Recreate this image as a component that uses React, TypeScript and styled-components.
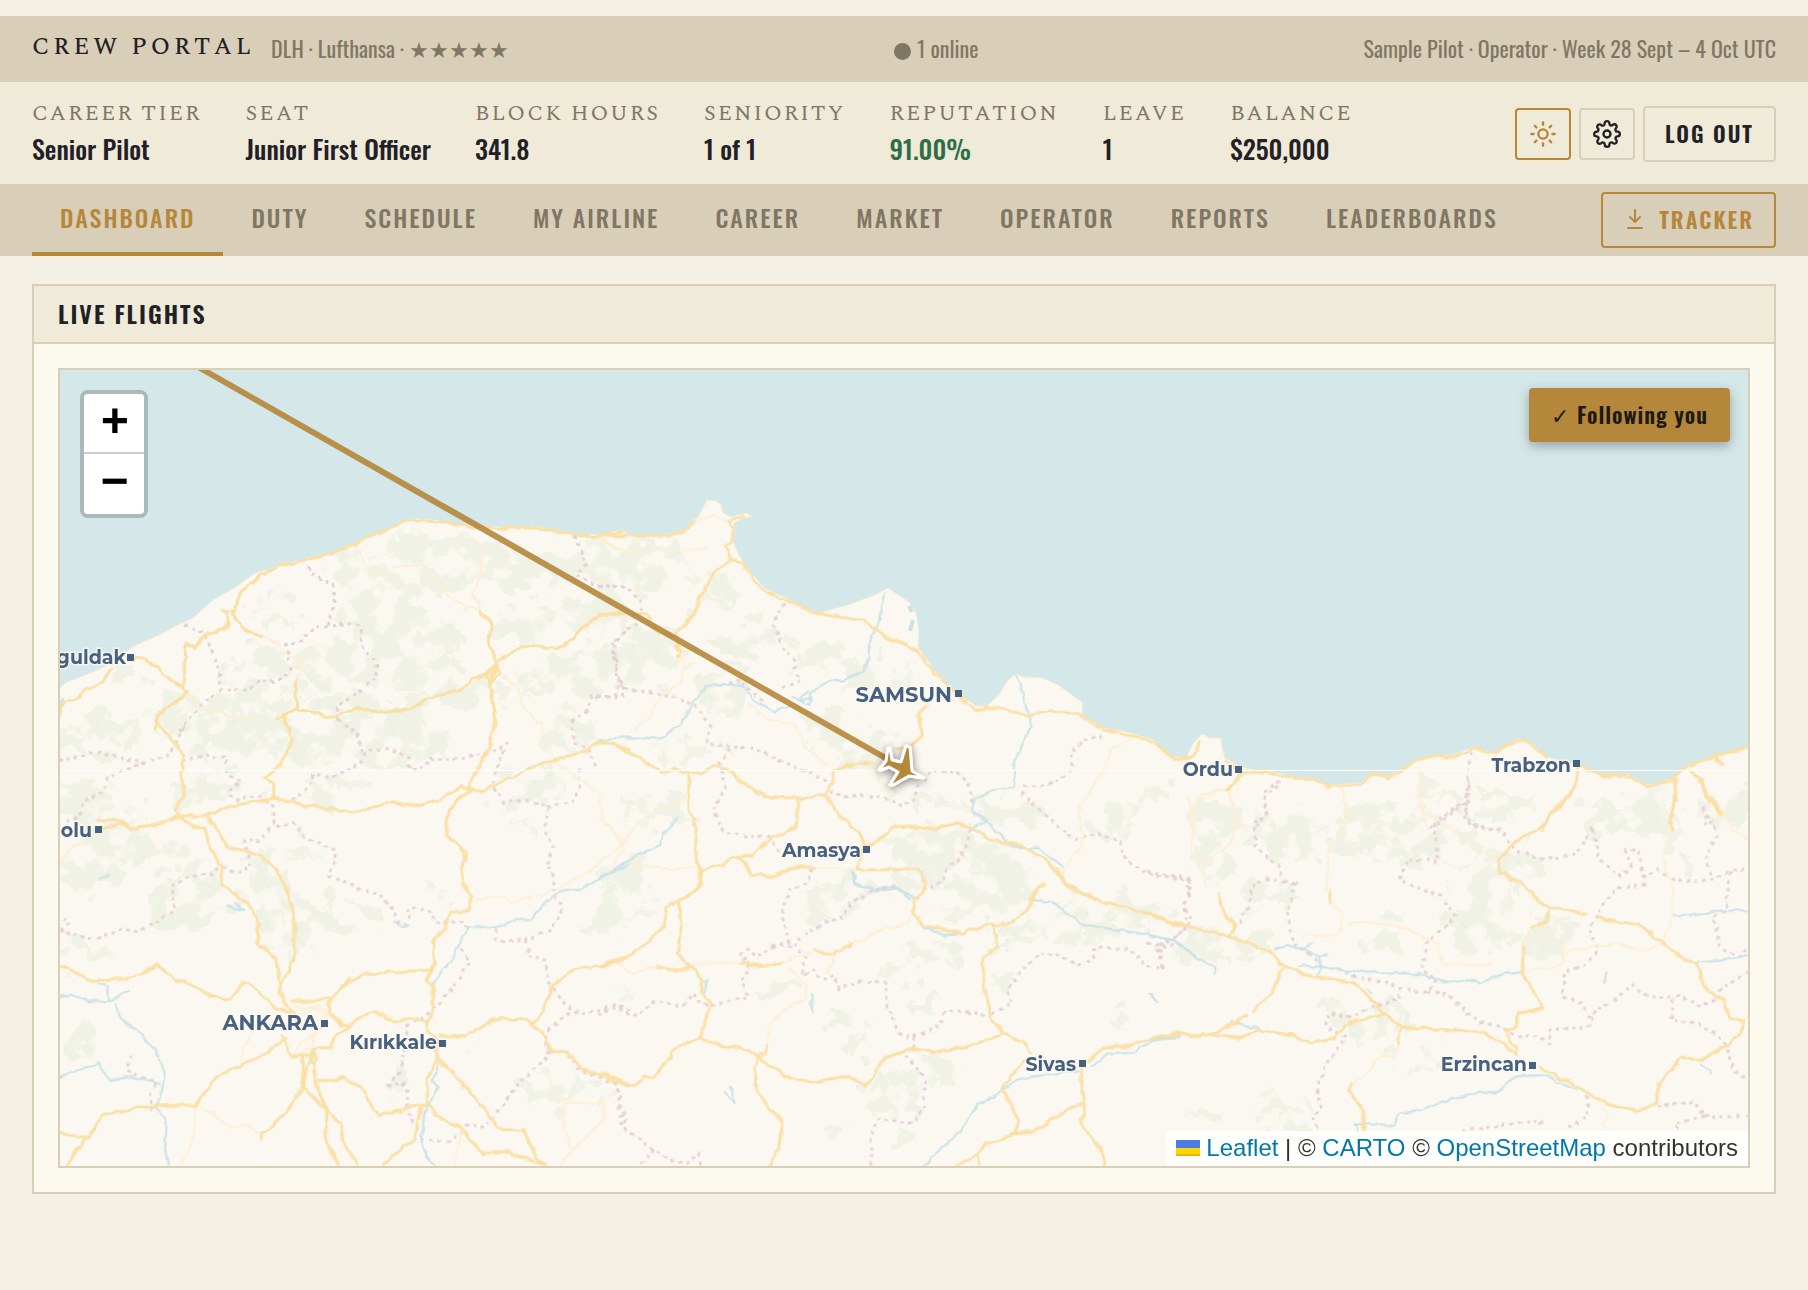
import React from "react";
import styled, { createGlobalStyle } from "styled-components";
import { Sun } from "lucide-react";
import { FiSettings } from "react-icons/fi";

const c = {
  page: "#f5f0e4",
  band: "#d9cfb8",
  soft: "#f0ead9",
  card: "#fcf9ee",
  ink: "#1f2126",
  muted: "#7f7764",
  gold: "#b5873a",
  green: "#2d6e47",
  sea: "#d5e8e9",
  land: "#fbf8f1",
  wood: "#eff2e4",
  road: "#fbe0a6",
  minor: "#fdefd6",
  border: "#e4d0d6",
  river: "#c8e2e8",
  label: "#46607f",
};

const condensed = `Oswald, "Liberation Sans Narrow", "Roboto Condensed", "Open Sans Condensed", "Liberation Sans", sans-serif`;
const serif = `Spectral, "Liberation Serif", serif`;

const Global = createGlobalStyle`
  * { box-sizing: border-box; }
  body { margin: 0; background: ${c.page}; color: ${c.ink}; font-family: ${condensed}; }
`;

const Page = styled.div`
  padding: 16px 0 96px;
`;

const TopBar = styled.header`
  display: flex;
  align-items: center;
  justify-content: space-between;
  height: 66px;
  padding: 0 32px 2px;
  background: ${c.band};
  color: ${c.muted};
  font-size: 22px;
  line-height: 32px;
`;

const Brand = styled.div`
  display: flex;
  align-items: center;
  gap: 16px;
`;

const Title = styled.h1`
  margin: 0;
  padding-bottom: 2px;
  color: ${c.ink};
  font-family: ${serif};
  font-size: 24px;
  font-weight: 500;
  letter-spacing: 4px;
`;

const Online = styled.span`
  display: flex;
  align-items: center;
  gap: 6px;
`;

const Dot = styled.span`
  width: 17px;
  height: 17px;
  margin-top: 6px;
  border-radius: 50%;
  background: currentColor;
`;

const StatsBar = styled.section`
  display: flex;
  align-items: center;
  justify-content: space-between;
  height: 102px;
  padding: 2px 32px 0;
  background: ${c.soft};
`;

const Stats = styled.dl`
  display: flex;
  gap: 44px;
  margin: 0;
`;

const StatLabel = styled.dt`
  color: ${c.muted};
  font-family: ${serif};
  font-size: 22px;
  line-height: 30px;
  letter-spacing: 2px;
`;

const StatValue = styled.dd<{ $good?: boolean }>`
  margin: 0;
  color: ${(p) => (p.$good ? c.green : c.ink)};
  font-size: 26px;
  font-weight: 500;
  line-height: 40px;
`;

const Actions = styled.div`
  display: flex;
  align-items: center;
  gap: 8px;
`;

const Button = styled.button<{ $gold?: boolean }>`
  display: flex;
  align-items: center;
  justify-content: center;
  gap: 12px;
  height: 56px;
  padding: 0 20px 2px;
  border: 2px solid ${(p) => (p.$gold ? c.gold : c.band)};
  border-radius: 4px;
  background: transparent;
  color: ${(p) => (p.$gold ? c.gold : c.ink)};
  font-family: ${condensed};
  font-size: 22px;
  font-weight: 600;
  letter-spacing: 2px;
  cursor: pointer;
`;

const IconButton = styled(Button)`
  width: 56px;
  height: 52px;
  padding: 0;
`;

const Nav = styled.nav`
  display: flex;
  align-items: center;
  justify-content: space-between;
  height: 72px;
  padding: 0 32px;
  background: ${c.band};
`;

const Tabs = styled.div`
  display: flex;
  align-self: stretch;
`;

const Tab = styled.a<{ $active?: boolean }>`
  padding: 2px 28px 0;
  border-bottom: 4px solid ${(p) => (p.$active ? c.gold : "transparent")};
  color: ${(p) => (p.$active ? c.gold : c.muted)};
  font-size: 24px;
  font-weight: 500;
  line-height: 62px;
  letter-spacing: 2px;
  text-decoration: none;
  white-space: nowrap;
`;

const Panel = styled.main`
  margin: 28px 32px 0;
  border: 2px solid ${c.band};
  background: ${c.card};
`;

const PanelTitle = styled.h2`
  margin: 0;
  padding: 0 24px 2px;
  border-bottom: 2px solid ${c.band};
  background: ${c.soft};
  font-size: 24px;
  font-weight: 600;
  line-height: 54px;
  letter-spacing: 2px;
`;

const PanelBody = styled.div`
  padding: 24px;
`;

const MapFrame = styled.div`
  position: relative;
  height: 800px;
  overflow: hidden;
  border: 2px solid ${c.band};
  background: ${c.sea};
`;

const MapSvg = styled.svg`
  display: block;
  width: 100%;
  height: 100%;
`;

const ZoomControl = styled.div`
  position: absolute;
  top: 20px;
  left: 20px;
  border: 4px solid rgba(0, 0, 0, 0.2);
  border-radius: 8px;
  background-clip: padding-box;
`;

const ZoomButton = styled.button`
  display: block;
  width: 60px;
  height: 60px;
  padding: 0;
  border: 0;
  background: #fff;
  color: #000;
  font: bold 48px/60px "Liberation Mono", monospace;
  text-indent: 2px;
  cursor: pointer;

  &:first-child {
    border-bottom: 2px solid #ccc;
    border-radius: 4px 4px 0 0;
  }
  &:last-child {
    border-radius: 0 0 4px 4px;
  }
`;

const FollowButton = styled.button`
  position: absolute;
  top: 18px;
  right: 18px;
  height: 54px;
  padding: 0 22px 2px;
  border: 0;
  border-radius: 4px;
  background: ${c.gold};
  box-shadow: 0 4px 12px rgba(0, 0, 0, 0.3);
  color: #1d1a12;
  font-family: ${condensed};
  font-size: 22px;
  font-weight: 600;
  letter-spacing: 1px;
  cursor: pointer;
`;

const Check = styled.span`
  font-weight: 400;
`;

const Attribution = styled.div`
  position: absolute;
  right: 0;
  bottom: 0;
  display: flex;
  align-items: center;
  gap: 6px;
  padding: 0 10px 2px;
  background: rgba(255, 255, 255, 0.8);
  color: #333;
  font: 24px/33px "Liberation Sans", sans-serif;

  a {
    color: #0078a8;
    text-decoration: none;
  }
`;

const Flag = styled.svg`
  width: 24px;
  height: 16px;
`;

type Tile = {
  x: number;
  y: number;
  kx: number;
  roads: string[];
  minor: string[];
  borders: string[];
  rivers: string[];
  woods: [number, number, number, number][];
};

/* Each tile keeps its own coordinates; x, y and kx place it on the map. */
const tiles: Tile[] = [
  {
    x: 30, y: 270, kx: 2.6133,
    roads: [
      "270,1165 310,1168 350,1210 400,1250 412,1265 380,1300 340,1330 330,1380",
      "405,1250 410,1120 430,1135 465,1092 520,1075 522,1030 505,1020 535,1025 545,980 575,940 650,890 730,868 790,852 840,828 890,800 995,748 1060,755 1120,765 1200,775 1330,773 1440,797 1500,795 1550,785",
      "535,1030 560,1080 605,1100",
      "78,1300 130,1285 140,1262 190,1240 215,1195",
      "78,1340 90,1300",
      "650,1345 700,1320 740,1325 770,1338 810,1338 850,1315 930,1328 1000,1315 1040,1285 1125,1262 1160,1225 1215,1210 1225,1175 1290,1128 1380,1135 1425,1105 1440,1075 1500,1035 1568,1025",
      "700,1320 696,1240 700,1235",
      "1180,1025 1210,1060 1200,1115 1222,1180 1205,1235 1218,1330 1215,1380",
      "1225,1180 1195,1215 1205,1240 1228,1210 1222,1180",
      "665,1345 680,1380",
    ],
    minor: [
      "840,828 865,840 870,875 905,910 945,915 950,890 1040,885 1050,920 1110,990 1180,1022",
      "605,1100 650,1120 680,1160 715,1180 700,1235",
      "1180,825 1185,900 1160,970 1180,1020",
      "412,1268 450,1310 520,1335 600,1350",
      "1230,1210 1280,1260 1290,1310 1330,1360",
      "1480,800 1530,835 1568,845",
    ],
    borders: [
      "725,870 735,910 800,950 795,1010 780,1065",
      "410,1062 460,1095 480,1150 500,1220 500,1260 450,1305 410,1355 395,1380",
      "500,1260 570,1260 600,1232 650,1235 685,1200 672,1120 715,1115 740,1075 780,1070 830,1060 865,1070 870,1130 910,1180 905,1230 840,1280 805,1310 810,1360",
      "1425,800 1440,840 1460,880 1430,915 1475,945 1568,952",
      "1560,1090 1525,1120 1535,1215 1560,1265 1540,1285 1475,1275 1455,1330 1420,1350",
    ],
    rivers: [],
    woods: [
      [1080, 850, 110, 70], [950, 920, 140, 60], [1250, 880, 110, 60], [1420, 860, 120, 70],
      [660, 1020, 60, 30], [920, 1050, 90, 70], [1010, 1110, 100, 60], [820, 1180, 130, 60],
      [600, 1200, 90, 50], [1080, 1230, 120, 60], [420, 1330, 100, 50], [1380, 1240, 120, 60],
      [1480, 1020, 110, 50], [250, 1210, 50, 20], [620, 1300, 90, 50], [1500, 1180, 70, 60],
      [880, 1330, 120, 40], [1300, 1050, 80, 40],
    ],
  },
  {
    x: 600, y: 450, kx: 2.6133,
    roads: [
      "0,255 80,258 150,260 215,248 250,218",
      "375,195 340,212 350,240 347,275 330,290 340,320 375,340 400,385 435,428 500,455 560,488 690,508 750,560 830,600 880,670 905,700 950,745 985,782 1040,772 1120,797 1180,785 1250,790 1320,840 1400,860 1450,875 1500,928 1545,925 1568,880",
      "345,325 300,375 262,440 250,495 200,550 205,600",
      "0,495 60,488 120,492 150,545 200,560 215,600 205,620",
      "0,875 40,880 70,905 110,925 160,965 200,958 250,972 300,950 335,955 370,990 430,1040 520,1045 595,1035 618,965 650,945 715,940",
      "595,1035 625,1095 680,1145 695,1190 740,1165 775,1130 830,1128 880,1138 930,1120 980,1138 1030,1172 1100,1185 1170,1230 1225,1305 1310,1350",
      "520,1048 515,1130 450,1165 400,1215 350,1222 320,1245 270,1260 255,1240 250,1110 235,1080 235,975",
      "370,1225 400,1275 460,1280 510,1250 560,1252",
      "270,1262 262,1310 215,1350",
      "690,1200 675,1260 835,1258 850,1285 852,1320 830,1348",
      "855,770 835,790 845,855 820,885 780,900",
      "1160,1300 1125,1350",
    ],
    minor: [
      "250,215 300,195 340,210", "205,303 250,300 285,290", "0,260 60,305 100,300 105,262",
      "205,600 220,640 215,695 165,735 130,800 95,838",
      "390,760 440,805 510,825 545,900 600,945", "720,945 735,1000 770,1015",
      "0,1100 55,1160 60,1200 25,1270", "60,1180 120,1100 220,1050 235,1000",
      "90,1240 160,1255 260,1255", "560,1252 670,1262",
      "1390,865 1340,900 1305,985 1255,1070 1265,1180 1215,1255 1210,1290",
      "1540,1040 1555,1110 1550,1160",
    ],
    borders: [
      "0,408 75,412 115,465 100,515 40,575 45,660 60,715 130,725 200,740 255,770 290,830 280,880 340,890 410,895 470,930 530,960 605,995 610,1030 660,1040 740,1040 790,1070 825,1050 830,1010 870,960 940,965 970,1010 975,1060",
      "485,465 455,515 480,590 510,630 525,695 470,715",
      "300,705 370,690 400,730 440,760",
      "340,900 315,940 330,1010 300,1080 325,1150 440,1160 470,1200",
      "1115,1010 1190,1000 1235,960 1235,900 1280,860 1330,860",
      "1105,1030 1170,1100 1215,1140 1240,1170 1310,1150 1360,1170 1375,1230 1430,1270 1545,1290 1540,1350",
      "968,1140 960,1200 915,1250 900,1290 855,1320",
      "555,1260 545,1300 495,1320", "0,740 40,740 50,690",
    ],
    rivers: [
      "745,430 735,510 705,580 705,620 690,665 640,690 590,695 555,730 550,765 505,740",
      "0,868 80,862 165,865 215,820 245,760 275,710 340,700 375,705 400,750 460,785 500,765",
      "1090,680 1105,720 1130,830 1085,930 1085,1010 1035,1020 980,1045 975,1080 1015,1115 970,1135",
      "205,1105 170,1150 160,1185 75,1230 0,1290", "1015,1115 1080,1190 1150,1195 1215,1255",
      "665,1270 670,1295 720,1320 770,1310 830,1348", "550,725 520,750 555,745",
    ],
    woods: [
      [110, 340, 110, 50], [90, 390, 90, 40], [300, 410, 60, 40], [400, 580, 90, 40],
      [120, 620, 90, 70], [330, 720, 70, 60], [590, 620, 70, 40], [720, 680, 80, 40],
      [240, 900, 90, 30], [700, 900, 80, 40], [600, 830, 60, 50], [900, 1060, 120, 25],
      [1060, 1100, 80, 30], [900, 1190, 120, 40], [960, 1270, 140, 50], [150, 1080, 80, 40],
      [1340, 1110, 60, 40], [70, 1280, 60, 40], [1440, 1060, 40, 30],
    ],
  },
  {
    x: 1180, y: 370, kx: 2.6133,
    roads: [
      "0,1168 22,1160",
      "125,1175 165,1208 230,1205 310,1227 350,1228 390,1248 475,1242 510,1210 545,1225 590,1192 650,1160 725,1158 775,1133 825,1150 885,1108 925,1125 960,1160",
      "165,1210 145,1240 120,1258",
      "1045,1185 1090,1210 1120,1220 1170,1216 1225,1248 1290,1228 1325,1190 1400,1158 1485,1132",
      "1045,1190 1035,1250 985,1310 950,1380", "1290,1228 1300,1290 1283,1330 1288,1380",
      "1335,1200 1365,1230 1375,1275 1400,1315 1420,1330", "1400,1158 1420,1185",
    ],
    minor: [
      "140,1240 90,1275 60,1270 25,1330 35,1380", "125,1258 140,1310 155,1380",
      "420,1250 440,1310 425,1380", "630,1200 625,1290 650,1370",
    ],
    borders: [
      "765,1150 755,1220 755,1290 745,1340 780,1375 850,1378",
      "262,1235 220,1270 230,1330 195,1380", "745,1300 690,1350 655,1370", "1370,1310 1380,1380",
    ],
    rivers: [],
    woods: [[90, 1310, 50, 30], [320, 1360, 70, 25], [560, 1350, 90, 30], [690, 1260, 50, 30], [840, 1300, 70, 35], [1150, 1330, 100, 30], [1440, 1290, 50, 50]],
  },
  {
    x: 30, y: 720, kx: 2.6133,
    roads: [
      "330,0 350,30 385,70 405,110 398,160 405,220 380,270 395,292 330,312 265,325 240,310 185,328",
      "180,300 235,298 265,325", "395,292 465,285 520,260 640,235 700,250 850,278 900,262 950,245 1000,258 1070,240 1130,202 1180,215 1250,178 1320,140 1400,110 1450,95 1500,62 1568,90",
      "665,0 688,60 655,135 615,175 640,195 640,230",
      "1220,0 1200,90 1175,140 1150,200", "1160,205 1110,250 1090,300 1090,340 1125,375 1135,400 1130,490 1158,530 1150,572 1100,578 1085,630 1058,660 1058,740 1040,780 1055,800 1055,880 1042,905 1045,940 1070,965",
      "1130,390 1145,400 1135,425", "395,292 430,318 460,322 470,380 505,440 500,490 575,555 600,610 595,670 645,715 655,800",
      "465,290 520,380 610,410 650,455 675,510 697,625 692,720 655,800 665,850 690,875",
      "78,740 105,742 150,780 215,780 270,770 335,735 380,780 410,785 480,830 525,838 560,785 600,810 640,865 690,880",
      "690,840 740,845 790,830 820,800 840,775", "820,800 880,760 1050,750 1055,735",
      "790,830 785,880 830,920 870,890 905,875 955,910 990,892 1045,905",
      "790,880 810,910 835,918 800,950 785,985 745,988",
      "670,955 600,1015 500,1060 435,1155 300,1158 190,1188 155,1255 78,1240", "145,1255 100,1335",
      "660,950 685,1005 745,1005", "718,1010 715,1100 670,1180 610,1240 610,1258",
      "740,1000 720,1060 718,1105 770,1165 815,1215 820,1260 860,1335",
      "748,990 750,1090 775,1170 778,1270 808,1335", "752,1082 800,1080 820,1070 870,1105 910,1185 990,1165 1040,1155",
      "1075,945 1140,948 1210,900 1300,895 1315,912 1345,870 1370,795 1420,750 1500,735 1568,708",
      "1310,912 1345,940 1365,995 1405,995 1445,1045 1568,1098",
      "1070,970 1065,1020 1110,1060 1200,1180 1230,1225 1290,1228 1325,1310 1350,1335",
      "1065,1020 1040,1075 1038,1150 1080,1195 1130,1225 1185,1300 1255,1298 1350,1335",
      "1025,1160 1005,1260 960,1300 925,1335",
    ],
    minor: [
      "78,430 115,380 150,360", "435,1160 430,1240 400,1335", "435,1155 480,1180 530,1225 570,1215 610,1245",
      "1158,542 1220,525 1260,545 1370,515 1470,450 1550,370 1500,290 1490,220 1380,130 1340,60 1340,0",
      "550,1035 560,985 585,945", "1355,1045 1365,1120 1400,1145 1500,1150 1540,1090", "1400,1150 1400,1230 1420,1290 1500,1200 1505,1150",
      "690,855 780,870 770,920 720,960 690,1000", "700,870 760,855 800,900", "1130,1230 1115,1335", "1420,1290 1385,1335",
      "700,890 745,870 775,885", "745,930 745,985 710,1000",
    ],
    borders: [
      "78,120 180,97 300,130 360,110 385,60 410,10", "405,125 460,105 515,115 520,165 555,185 520,215 540,240 600,225 640,260 640,310",
      "300,130 205,170 190,220 140,245 130,290 90,305", "690,240 740,190 745,160 790,175 865,130 880,95 935,85 990,110 995,150 1040,140 1045,115 1120,115 1200,100 1250,70 1220,150 1210,200 1240,245 1300,240 1355,265 1420,245 1440,200 1440,140",
      "810,0 860,45 870,95", "640,310 600,365 560,360 580,440 540,460 500,440 480,460 420,470 370,495 380,570 330,610 280,635 240,625 175,660 85,635 105,610 85,590",
      "650,320 690,310 720,350 800,390 800,430 780,465 870,510 910,515 945,560 970,615 995,600 990,565 1045,570 1060,610 1130,605 1150,625",
      "1355,265 1350,330 1370,380 1350,430 1375,480 1370,525 1395,560 1365,630 1295,660 1220,662 1218,625",
      "1300,665 1305,710 1350,720 1355,780 1400,850 1440,885 1500,870 1530,855 1568,868", "1410,880 1360,925 1350,970 1360,1005 1290,1080 1230,1165 1190,1225 1140,1215",
      "1130,690 1150,720 1125,780 1080,840 1040,885 990,915 975,1020 965,1060 930,1100 985,1090 995,1190 1015,1230",
      "1410,1005 1440,1050 1535,1090 1550,1170 1560,1240", "265,1010 255,1050 330,1090 315,1130 320,1180", "1050,1260 1100,1262 1130,1240",
      "1420,0 1425,70 1465,90 1480,140",
    ],
    rivers: [
      "78,835 110,825 150,840 210,845 205,800 180,790", "210,845 260,812", "225,850 235,890 300,950 340,1010 355,1060 345,1130 330,1160 360,1210 355,1290 365,1335",
      "78,1072 130,1050 180,1030 210,1080 270,1070 340,1095", "185,475 210,467", "520,560 560,570 540,550", "955,605 975,620 990,612",
      "1055,790 1110,710 1145,630 1150,618 1215,625 1270,600 1310,600 1350,545 1400,510 1440,510 1500,470 1568,430",
      "1070,1035 1055,1080 1070,1105 1045,1150 1030,1180 1025,1260 1040,1310 1060,1335", "740,985 740,1030",
    ],
    woods: [
      [180, 50, 90, 60], [520, 60, 120, 50], [720, 60, 120, 60], [960, 60, 120, 60], [170, 240, 90, 50],
      [480, 200, 90, 40], [780, 210, 80, 30], [260, 370, 110, 60], [150, 450, 70, 70], [430, 530, 80, 90],
      [640, 500, 50, 110], [740, 600, 60, 60], [720, 390, 60, 30], [1290, 230, 70, 70], [1050, 500, 30, 30],
      [130, 690, 60, 30], [900, 580, 40, 40], [140, 960, 50, 50], [1390, 1100, 90, 50], [960, 1090, 30, 50],
      [1160, 970, 18, 25], [1520, 580, 40, 50], [1390, 50, 60, 50], [650, 640, 30, 50],
    ],
  },
  {
    x: 600, y: 820, kx: 2.6133,
    roads: [
      "265,155 255,210 210,240 175,265 170,315 130,365 60,425 0,440", "210,240 215,320 205,400 240,440 270,480 268,515 292,550 265,652",
      "0,760 45,775 90,797 115,772 145,772 200,685 265,652 310,675 395,688 430,725 500,775 560,790 630,770 670,778 700,800 745,715 820,685 870,697 960,680 1058,645",
      "150,440 205,453 240,438", "372,428 425,440 480,430", "565,392 605,403 660,372",
      "440,675 435,700 415,712 408,740 412,815 480,910 470,980 445,1035",
      "830,232 820,278 850,320 950,340 1010,315 1070,312 1120,270 1140,215 1165,190", "1030,318 1040,375 1005,415 1003,480 1025,590 1055,640 1108,665 1128,700",
      "1110,720 1055,805 1078,860 1095,900 1085,940 1130,938 1240,858 1270,855 1258,910 1320,1000 1322,1035",
      "1085,940 1010,972 990,1000 935,1035", "990,1000 995,1035", "1258,745 1260,810 1270,855",
      "1275,725 1320,682 1390,675 1440,657 1490,652 1515,638 1568,650", "1200,150 1225,200 1300,240 1420,275 1500,310 1568,328",
    ],
    minor: [
      "245,432 370,430", "480,430 540,402 570,395", "660,372 730,335 805,310 820,280", "500,440 545,500 540,540 500,555 445,610 440,675",
      "620,400 600,460", "50,430 85,460 150,440", "0,850 15,880 5,895",
    ],
    borders: [
      "0,585 40,560 100,590 140,545 220,555 245,520 265,555 320,550 390,530 370,485 395,450 370,400 390,385 410,410 470,375 495,370 490,330 475,290 495,220",
      "770,200 720,210 660,245 640,290 590,310 525,350 510,380 540,410 530,465 560,450 580,480 615,465 625,505 690,485 750,490 750,550 770,600 780,640 820,650 890,620 905,575 980,575 1015,595",
      "1030,580 1080,550 1065,510 1100,460 1150,400 1200,405 1245,435 1290,420 1300,380 1390,390 1430,440 1475,445 1465,380 1510,370",
      "825,655 825,685", "800,710 850,770 850,860 820,910 730,895 715,930 710,1035", "45,790 60,920 140,985 180,1020 230,1030 260,1000 265,1035",
      "1545,200 1530,260 1550,300 1510,350", "140,990 105,1035", "500,380 450,375",
    ],
    rivers: [
      "815,240 780,205 720,215 670,190 665,155", "850,325 900,345 945,340", "1130,240 1180,245 1215,275 1270,315 1360,330 1440,345 1500,360 1568,420",
      "555,520 558,580", "275,485 285,480 275,515", "1130,770 1090,780 1050,820 990,855 950,925 850,1035", "1290,735 1330,700 1400,695 1440,665",
      "325,815 355,850 345,800", "1445,525 1455,545", "1130,770 1200,760 1250,755",
    ],
    woods: [
      [950, 140, 130, 50], [960, 210, 150, 60], [870, 390, 60, 30], [640, 200, 50, 30], [600, 260, 60, 30],
      [90, 280, 50, 40], [1180, 330, 130, 40], [1370, 270, 130, 30], [780, 820, 90, 80], [640, 640, 40, 40],
      [900, 750, 35, 30], [850, 570, 35, 30], [780, 940, 20, 50], [640, 930, 30, 30], [1360, 600, 25, 15], [780, 460, 60, 20], [75, 530, 30, 30],
      [1060, 490, 30, 30], [460, 510, 35, 20],
    ],
  },
  {
    x: 1150, y: 780, kx: 2.3833,
    roads: [
      "0,402 80,435 180,465 290,512 310,550 370,585 490,608 555,695 600,740 690,748 790,755 840,785 875,825",
      "165,345 180,400 205,435 195,465", "215,0 185,28", "320,565 290,640 250,695",
      "0,778 70,760 100,770 155,762 235,705", "155,765 210,775 260,750 340,765 385,788 445,772 475,728 555,705",
      "600,740 595,790", "485,912 472,930 510,985 513,1050", "428,330 430,370",
      "1018,0 1005,40 945,130 860,200 835,240 832,275 890,310 940,375 975,385 1040,400", "1070,412 1120,430 1170,432 1225,488 1265,530 1305,548 1320,620 1370,660 1385,712 1420,725 1405,770 1370,800 1320,838 1270,835 1215,910 1210,970 1165,992 1090,970 1000,905 930,862",
      "955,390 945,425 910,445", "895,500 888,580 915,630 938,685 880,700 875,745 850,752 860,785 878,800 875,825",
      "1255,0 1250,80 1240,130", "1312,0 1330,40 1362,97",
    ],
    minor: [
      "185,28 140,40 105,80 100,230 125,250 135,320", "190,30 210,120 195,190 125,250", "460,20 470,130 430,210 420,330",
      "430,370 462,400 455,465 370,465", "470,435 500,425 600,440 690,490 700,550 810,555", "640,20 660,100 760,180 830,240",
      "595,790 590,820 545,835 520,880 485,912", "1240,130 1225,240 1248,330 1240,430 1225,490", "910,445 895,500",
      "890,578 980,560 990,515 960,470 940,440", "990,515 1120,490 1190,510 1225,490", "1080,985 1095,1000 1080,1030 1090,1050", "1370,100 1390,150 1425,170",
    ],
    borders: [
      "305,20 275,50 280,110 250,130 255,200 310,260 320,300 350,310", "320,305 270,295 240,330 240,370 210,440", "350,310 330,400 345,490 400,540",
      "0,275 95,295 85,380 90,435 65,470 20,500 30,560", "760,0 755,100 780,140 845,155 870,210 940,240 1020,220 1060,140 1070,230 1120,290 1150,260 1135,210 1165,210 1180,290",
      "740,75 680,130 690,245 620,235 595,300 700,350 730,410 660,490 650,570 685,600 665,635 600,625 595,660 530,680 480,710 430,700 420,740 470,770 420,860 400,930 410,980 390,1010 405,1050",
      "600,625 540,600 490,590 440,560", "665,635 720,650 770,715 830,740 880,770 930,770 955,790 950,750 1050,740 1055,700 1105,660 1155,615 1190,650 1270,650 1310,680 1350,660",
      "1180,315 1110,325 1080,380 1050,450 1070,510 1045,550 990,580 985,650 1030,670 1050,720", "1180,290 1215,270 1250,300 1340,300 1380,275 1425,265",
      "1250,660 1245,720 1310,730 1370,780 1390,860 1425,900", "1320,85 1355,160 1325,230 1345,300", "1385,280 1375,390 1345,410 1360,500 1410,530 1425,490",
      "1425,575 1360,630 1355,660", "1045,950 1045,1010 990,1050", "1215,980 1300,965 1320,1010 1425,1010", "1320,1010 1255,1030 1260,1050", "750,1052 850,1035 935,1020 940,1048",
      "0,490 30,500",
    ],
    rivers: [
      "0,470 60,480 110,530 155,560 158,585", "300,505 330,495 370,510 405,530 410,560 400,585", "355,560 410,560 450,570 520,575 640,582 720,608 760,600 790,608 850,580 885,575",
      "365,510 385,490", "405,530 425,522", "520,628 535,640", "1245,405 1300,405 1360,392 1425,392", "1305,545 1400,535 1425,525",
      "940,885 870,890 840,930 720,955 650,990 600,1000 580,1035 520,1030 490,1030 500,1050", "945,885 1020,930", "1090,580 1085,610", "1315,850 1340,880",
      "195,725 260,745", "0,645 20,665", "0,785 70,768",
    ],
    woods: [
      [160, 180, 60, 80], [330, 150, 90, 50], [530, 180, 80, 60], [700, 190, 80, 60], [380, 220, 50, 50], [170, 490, 90, 35], [560, 470, 40, 40],
      [800, 430, 80, 80], [290, 350, 60, 50], [1200, 110, 60, 80], [1380, 80, 50, 50], [800, 350, 60, 50], [950, 490, 50, 40], [860, 260, 60, 40],
      [550, 745, 40, 30], [450, 700, 50, 25], [640, 850, 40, 20], [320, 990, 60, 25], [130, 1000, 25, 18], [970, 440, 50, 20], [1270, 240, 15, 25], [590, 700, 40, 20],
      [1090, 130, 50, 40],
    ],
  },
];

const coast =
  "60,688 68,682 84,676 103,668 112,663 133,647 160,635 179,625 194,618 214,600 237,587 256,573 279,567 309,558 336,553 352,545 371,537 394,528 411,519 436,520 459,524 489,527 539,527 566,532 581,536 604,534 623,530 631,535 657,536 682,532 696,522 703,510 708,500 717,501 722,505 724,513 732,517 747,513 753,516 742,519 735,523 733,540 739,553 747,567 765,588 791,600 807,609 820,613 849,605 876,595 889,588 910,602 917,613 920,630 919,647 933,667 944,680 964,697 977,706 988,706 1000,695 1009,680 1017,674 1025,677 1044,678 1059,685 1083,702 1084,717 1105,728 1132,733 1155,740 1170,757 1188,757 1193,745 1203,734 1211,738 1222,738 1223,747 1226,758 1241,767 1260,771 1283,774 1299,778 1314,778 1329,785 1345,784 1362,783 1371,775 1387,777 1406,767 1429,756 1455,755 1475,747 1494,753 1519,739 1534,745 1547,757 1580,765 1597,773 1609,776 1628,774 1647,784 1658,786 1674,778 1689,767 1716,755 1731,753 1750,747";

const cities = [
  { name: "guldak", x: 127, y: 664, dot: [131, 657], size: 19 },
  { name: "olu", x: 93, y: 837, dot: [99, 829], size: 19 },
  { name: "SAMSUN", x: 953, y: 702, dot: [959, 693], size: 21 },
  { name: "Amasya", x: 862, y: 857, dot: [867, 849], size: 19 },
  { name: "Ordu", x: 1234, y: 776, dot: [1239, 769], size: 19 },
  { name: "Trabzon", x: 1572, y: 772, dot: [1577, 763], size: 19 },
  { name: "ANKARA", x: 319, y: 1030, dot: [325, 1023], size: 21 },
  { name: "Kırıkkale", x: 438, y: 1049, dot: [443, 1043], size: 19 },
  { name: "Sivas", x: 1077, y: 1071, dot: [1083, 1063], size: 19 },
  { name: "Erzincan", x: 1528, y: 1071, dot: [1533, 1065], size: 19 },
] as const;

const line = (points: string) => <polyline key={points} points={points} vectorEffect="non-scaling-stroke" />;
const place = (t: Tile) => `translate(${t.x} ${t.y}) scale(${1 / t.kx} ${1 / 3})`;

function FlightMap() {
  return (
    <MapSvg viewBox="60 370 1690 796" preserveAspectRatio="xMidYMid slice" role="img" aria-label="Live flight map">
      <defs>
        <filter id="rough" filterUnits="userSpaceOnUse" x="60" y="370" width="1690" height="796">
          <feTurbulence type="fractalNoise" baseFrequency="0.035" numOctaves="4" seed="7" result="edge" />
          <feDisplacementMap in="SourceGraphic" in2="edge" scale="60" xChannelSelector="R" yChannelSelector="G" result="shape" />
          <feTurbulence type="fractalNoise" baseFrequency="0.045" numOctaves="4" seed="21" />
          <feColorMatrix type="matrix" values="0 0 0 0 0  0 0 0 0 0  0 0 0 0 0  9 0 0 0 -3.7" result="mottle" />
          <feComposite in="shape" in2="mottle" operator="in" />
          <feGaussianBlur stdDeviation="0.7" />
        </filter>
        <filter id="wobble" filterUnits="userSpaceOnUse" x="60" y="370" width="1690" height="796">
          <feTurbulence type="fractalNoise" baseFrequency="0.09" numOctaves="2" seed="3" />
          <feDisplacementMap in="SourceGraphic" scale="6" xChannelSelector="R" yChannelSelector="G" />
          <feGaussianBlur stdDeviation="0.5" />
        </filter>
        <filter id="planeShadow" x="-60%" y="-60%" width="220%" height="220%">
          <feDropShadow dx="0" dy="2" stdDeviation="4" floodColor="#000" floodOpacity="0.5" />
        </filter>
        <clipPath id="land">
          <polygon points={`${coast} 1750,1166 60,1166`} />
        </clipPath>
      </defs>
      <rect x="60" y="370" width="1690" height="796" fill={c.sea} />
      <polygon points={`${coast} 1752,1168 58,1168`} fill={c.land} />
      <polyline points={coast} fill="none" stroke="#f6ecd2" strokeWidth="1" />
      <polygon points="60,702 64,697 66,704 60,712" fill={c.river} />
      <g clipPath="url(#land)">
        <g filter="url(#rough)" fill={c.wood}>
          {tiles.map((t) => (
            <g key={`${t.x}-${t.y}`} transform={place(t)}>
              {t.woods.map(([x, y, rx, ry]) => (
                <ellipse key={`${x}-${y}`} cx={x} cy={y} rx={rx * 1.2} ry={ry * 1.2} />
              ))}
            </g>
          ))}
        </g>
      </g>
      <g fill="none" strokeLinejoin="round" strokeLinecap="round" filter="url(#wobble)">
        {tiles.map((t) => (
          <g key={`${t.x}-${t.y}`} transform={place(t)}>
            <g stroke={c.border} strokeWidth="3" strokeDasharray="1 7">{t.borders.map(line)}</g>
            <g stroke={c.river} strokeWidth="2">{t.rivers.map(line)}</g>
            <g stroke={c.minor} strokeWidth="2">{t.minor.map(line)}</g>
            <g stroke={c.road} strokeWidth="3">{t.roads.map(line)}</g>
          </g>
        ))}
      </g>
      <path d="M910 606l3 6M914 620l-3 11" stroke={c.river} strokeWidth="4" />
      <path d="M60 770.5H1750" stroke="#fff" strokeWidth="1" />
      <g fontFamily="Montserrat, Inter, sans-serif" fontWeight="700" textAnchor="end" fill={c.label}>
        {cities.map((city) => (
          <g key={city.name}>
            <text x={city.x} y={city.y} fontSize={city.size} stroke="#fbf8f1" strokeOpacity="0.8" strokeWidth="3" paintOrder="stroke">
              {city.name}
            </text>
            <rect x={city.dot[0] - 3} y={city.dot[1] - 3} width="7" height="7" />
          </g>
        ))}
      </g>
      <path d="M194 364L890 760" stroke={c.gold} strokeWidth="6" opacity="0.9" />
      <path
        d="M925 778L913 771 911 747 907 746 902 762 893 760 891 748 889 748 887 761 880 770 882 770 890 767 899 772 891 785 894 785 910 776Z"
        fill={c.gold}
        stroke="#fff"
        strokeWidth="3"
        strokeLinejoin="round"
        filter="url(#planeShadow)"
      />
    </MapSvg>
  );
}

const stats = [
  { label: "CAREER TIER", value: "Senior Pilot" },
  { label: "SEAT", value: "Junior First Officer" },
  { label: "BLOCK HOURS", value: "341.8" },
  { label: "SENIORITY", value: "1 of 1" },
  { label: "REPUTATION", value: "91.00%", good: true },
  { label: "LEAVE", value: "1" },
  { label: "BALANCE", value: "$250,000" },
];

const tabs = ["DASHBOARD", "DUTY", "SCHEDULE", "MY AIRLINE", "CAREER", "MARKET", "OPERATOR", "REPORTS", "LEADERBOARDS"];

export default function App() {
  return (
    <>
      <Global />
      <Page>
        <TopBar>
          <Brand>
            <Title>CREW PORTAL</Title>
            <span>DLH · Lufthansa · ★★★★★</span>
          </Brand>
          <Online>
            <Dot />1 online
          </Online>
          <span>Sample Pilot · Operator · Week 28 Sept – 4 Oct UTC</span>
        </TopBar>
        <StatsBar>
          <Stats>
            {stats.map((s) => (
              <div key={s.label}>
                <StatLabel>{s.label}</StatLabel>
                <StatValue $good={s.good}>{s.value}</StatValue>
              </div>
            ))}
          </Stats>
          <Actions>
            <IconButton $gold type="button" aria-label="Light theme">
              <Sun size={28} />
            </IconButton>
            <IconButton type="button" aria-label="Settings">
              <FiSettings size={28} />
            </IconButton>
            <Button type="button">LOG OUT</Button>
          </Actions>
        </StatsBar>
        <Nav>
          <Tabs>
            {tabs.map((t, i) => (
              <Tab key={t} href="#" $active={i === 0}>
                {t}
              </Tab>
            ))}
          </Tabs>
          <Button $gold type="button">
            <svg width="24" height="24" viewBox="0 0 24 24" fill="none" stroke="currentColor" strokeWidth="2" strokeLinecap="round" strokeLinejoin="round">
              <path d="M12 3v12M7 10l5 5 5-5M5 21h14" />
            </svg>
            TRACKER
          </Button>
        </Nav>
        <Panel>
          <PanelTitle>LIVE FLIGHTS</PanelTitle>
          <PanelBody>
            <MapFrame>
              <FlightMap />
              <ZoomControl>
                <ZoomButton type="button" aria-label="Zoom in">+</ZoomButton>
                <ZoomButton type="button" aria-label="Zoom out">−</ZoomButton>
              </ZoomControl>
              <FollowButton type="button">
                <Check>✓</Check> Following you
              </FollowButton>
              <Attribution>
                <Flag viewBox="0 0 12 8" aria-hidden="true">
                  <path fill="#4c7be1" d="M0 0h12v4H0z" />
                  <path fill="#ffd500" d="M0 4h12v3H0z" />
                  <path fill="#e0bc00" d="M0 7h12v1H0z" />
                </Flag>
                <span>
                  <a href="#leaflet">Leaflet</a> | © <a href="#carto">CARTO</a> © <a href="#osm">OpenStreetMap</a> contributors
                </span>
              </Attribution>
            </MapFrame>
          </PanelBody>
        </Panel>
      </Page>
    </>
  );
}
